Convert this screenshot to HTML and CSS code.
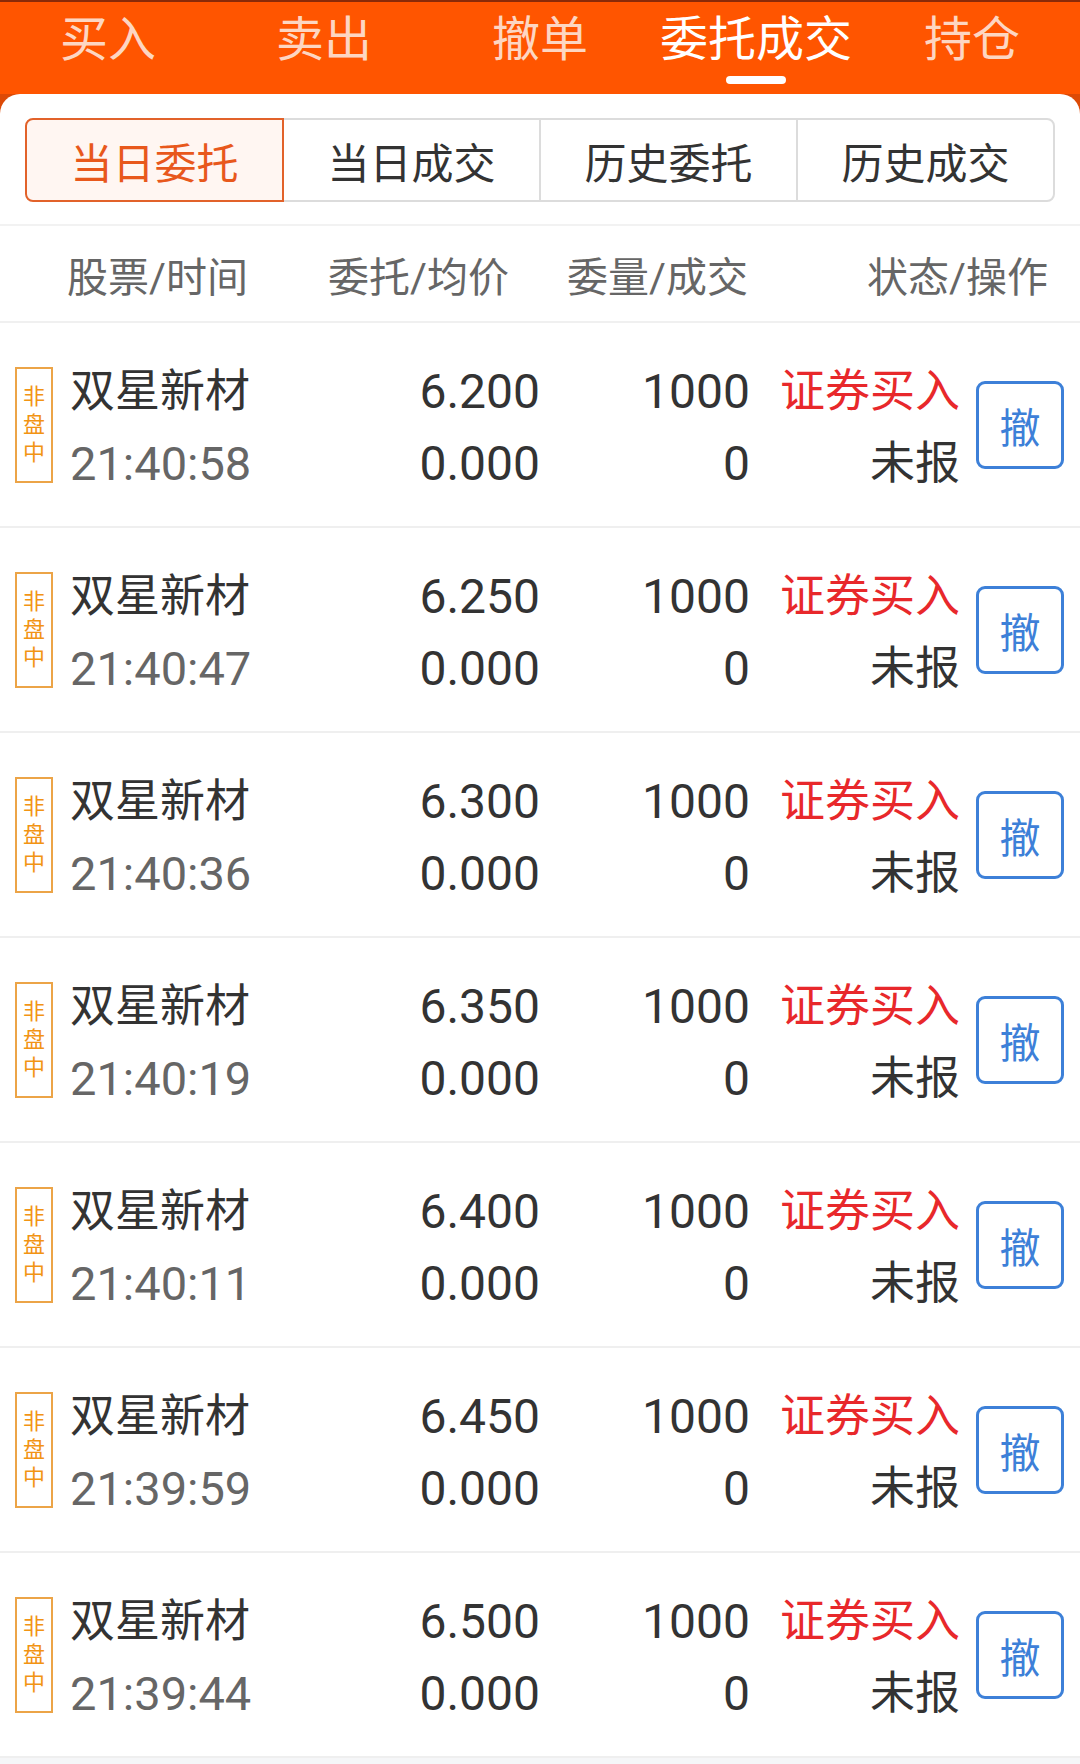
FILE: index.html
```html
<!DOCTYPE html>
<html lang="zh-CN">
<head>
    <meta charset="UTF-8">
    <meta name="viewport" content="width=device-width, initial-scale=1.0">
    <title>委托成交</title>
    <link rel="stylesheet" href="styles.css">
</head>
<body>
    <div class="top-bar">
        <div class="tab">买入</div>
        <div class="tab">卖出</div>
        <div class="tab">撤单</div>
        <div class="tab active">委托成交<span class="tab-line"></span></div>
        <div class="tab">持仓</div>
    </div>

    <div class="main">
        <div class="card">
            <div class="segments">
                <div class="seg active">当日委托</div>
                <div class="seg">当日成交</div>
                <div class="seg">历史委托</div>
                <div class="seg">历史成交</div>
            </div>

            <div class="list-head">
                <span>股票/时间</span>
                <span>委托/均价</span>
                <span>委量/成交</span>
                <span>状态/操作</span>
            </div>

            <div class="order">
                <div class="badge">非<br>盘<br>中</div>
                <div class="col stock"><div class="name">双星新材</div><div class="time">21:40:58</div></div>
                <div class="col price"><div>6.200</div><div>0.000</div></div>
                <div class="col qty"><div>1000</div><div>0</div></div>
                <div class="col status"><div class="buy">证券买入</div><div>未报</div></div>
                <button class="cancel">撤</button>
            </div>

            <div class="order">
                <div class="badge">非<br>盘<br>中</div>
                <div class="col stock"><div class="name">双星新材</div><div class="time">21:40:47</div></div>
                <div class="col price"><div>6.250</div><div>0.000</div></div>
                <div class="col qty"><div>1000</div><div>0</div></div>
                <div class="col status"><div class="buy">证券买入</div><div>未报</div></div>
                <button class="cancel">撤</button>
            </div>

            <div class="order">
                <div class="badge">非<br>盘<br>中</div>
                <div class="col stock"><div class="name">双星新材</div><div class="time">21:40:36</div></div>
                <div class="col price"><div>6.300</div><div>0.000</div></div>
                <div class="col qty"><div>1000</div><div>0</div></div>
                <div class="col status"><div class="buy">证券买入</div><div>未报</div></div>
                <button class="cancel">撤</button>
            </div>

            <div class="order">
                <div class="badge">非<br>盘<br>中</div>
                <div class="col stock"><div class="name">双星新材</div><div class="time">21:40:19</div></div>
                <div class="col price"><div>6.350</div><div>0.000</div></div>
                <div class="col qty"><div>1000</div><div>0</div></div>
                <div class="col status"><div class="buy">证券买入</div><div>未报</div></div>
                <button class="cancel">撤</button>
            </div>

            <div class="order">
                <div class="badge">非<br>盘<br>中</div>
                <div class="col stock"><div class="name">双星新材</div><div class="time">21:40:11</div></div>
                <div class="col price"><div>6.400</div><div>0.000</div></div>
                <div class="col qty"><div>1000</div><div>0</div></div>
                <div class="col status"><div class="buy">证券买入</div><div>未报</div></div>
                <button class="cancel">撤</button>
            </div>

            <div class="order">
                <div class="badge">非<br>盘<br>中</div>
                <div class="col stock"><div class="name">双星新材</div><div class="time">21:39:59</div></div>
                <div class="col price"><div>6.450</div><div>0.000</div></div>
                <div class="col qty"><div>1000</div><div>0</div></div>
                <div class="col status"><div class="buy">证券买入</div><div>未报</div></div>
                <button class="cancel">撤</button>
            </div>

            <div class="order">
                <div class="badge">非<br>盘<br>中</div>
                <div class="col stock"><div class="name">双星新材</div><div class="time">21:39:44</div></div>
                <div class="col price"><div>6.500</div><div>0.000</div></div>
                <div class="col qty"><div>1000</div><div>0</div></div>
                <div class="col status"><div class="buy">证券买入</div><div>未报</div></div>
                <button class="cancel">撤</button>
            </div>
        </div>
    </div>
</body>
</html>
```

FILE: styles.css
```css
body {
    font-family: Roboto, "Noto Sans CJK SC", sans-serif;
    margin: 0;
    padding: 0;
    width: 1080px;
    min-height: 1764px;
    background-color: #f5f6f8;
    color: #333;
}

/* Barra superior laranja */
.top-bar {
    display: grid;
    grid-template-columns: repeat(5, 1fr);
    height: 94px;
    background-color: #ff5500;
    box-shadow: inset 0 2px 0 #8a2a08;
}

.tab {
    display: flex;
    flex-direction: column;
    align-items: center;
    padding-top: 11px;
    font-size: 48px;
    line-height: 58px;
    color: #fdd6c2;
}

.tab.active {
    color: #fff;
}

.tab-line {
    display: block;
    width: 60px;
    height: 8px;
    margin-top: 7px;
    border-radius: 4px;
    background-color: #fff;
}

.main {
    background: linear-gradient(#dc4a06 0, #dc4a06 30px, #f5f6f8 30px);
}

.card {
    background-color: #fff;
    border-radius: 20px 20px 0 0;
    padding-top: 24px;
}

/* Abas segmentadas */
.segments {
    display: flex;
    margin: 0 25px;
    height: 84px;
}

.seg {
    flex: 1;
    display: flex;
    align-items: center;
    justify-content: center;
    border: 2px solid #dcdcdc;
    margin-left: -2px;
    font-size: 42px;
    color: #333;
}

.seg:first-child {
    margin-left: 0;
    border-radius: 8px 0 0 8px;
}

.seg:last-child {
    border-radius: 0 8px 8px 0;
}

.seg.active {
    position: relative;
    z-index: 1;
    border-color: #e2622a;
    background-color: #fff6f2;
    color: #e8581c;
}

/* Cabeçalho da lista */
.list-head {
    display: grid;
    grid-template-columns: 261px 239px 300px auto;
    align-items: center;
    height: 95px;
    margin-top: 22px;
    padding-left: 67px;
    border-top: 2px solid #f2f2f2;
    border-bottom: 2px solid #f0f0f0;
    font-size: 41px;
    color: #666;
}

/* Linhas de ordens */
.order {
    display: flex;
    align-items: center;
    height: 203px;
    border-bottom: 2px solid #efefef;
    font-size: 48px;
    line-height: 72px;
}

.badge {
    width: 34px;
    margin-left: 15px;
    padding: 14px 0;
    border: 2px solid #eca447;
    font-size: 22px;
    line-height: 28px;
    text-align: center;
    color: #f29414;
}

.col {
    display: flex;
    flex-direction: column;
    padding-top: 6px;
    text-align: right;
}

.stock {
    width: 200px;
    margin-left: 17px;
    text-align: left;
}

.name {
    font-size: 45px;
}

.time {
    font-size: 47px;
    color: #666;
}

.price {
    width: 270px;
}

.qty {
    width: 210px;
}

.status {
    width: 210px;
    font-size: 45px;
}

.buy {
    color: #e8282b;
}

.cancel {
    width: 88px;
    height: 88px;
    margin-left: 16px;
    padding: 0;
    border: 3px solid #3d80d8;
    border-radius: 9px;
    background-color: #fff;
    font-family: inherit;
    font-size: 41px;
    color: #3d80d8;
}
```
